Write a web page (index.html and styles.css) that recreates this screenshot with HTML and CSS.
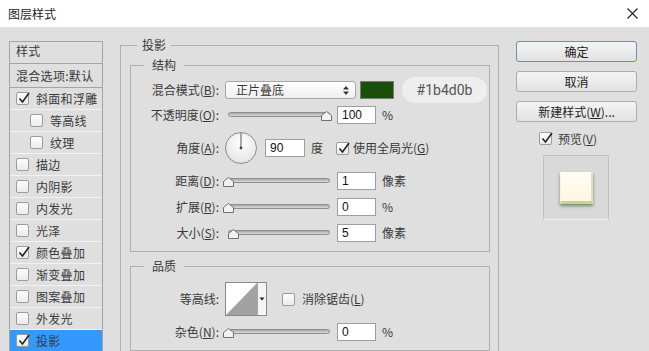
FILE: index.html
```html
<!DOCTYPE html>
<html lang="zh-CN">
<head>
  <meta charset="UTF-8" />
  <title>图层样式</title>
  <link rel="stylesheet" href="styles.css">
</head>
<body>
  <div class="titlebar">
    <span class="title">图层样式</span>
    <svg class="close" width="11" height="11" viewBox="0 0 11 11"><path d="M0.5 0.5L10.5 10.5M10.5 0.5L0.5 10.5" stroke="#222" stroke-width="1.1" fill="none"/></svg>
  </div>

  <div class="dialog">
    <ul class="style-list">
      <li class="list-head">样式</li>
      <li class="list-blend">混合选项:默认</li>
      <li class="item"><span class="cb"><svg class="tick" viewBox="0 0 14 14"><path d="M2.5 7.5L5.5 11L12 2" stroke="#222" stroke-width="1.6" fill="none"/></svg></span>斜面和浮雕</li>
      <li class="item sub"><span class="cb"></span>等高线</li>
      <li class="item sub"><span class="cb"></span>纹理</li>
      <li class="item"><span class="cb"></span>描边</li>
      <li class="item"><span class="cb"></span>内阴影</li>
      <li class="item"><span class="cb"></span>内发光</li>
      <li class="item"><span class="cb"></span>光泽</li>
      <li class="item"><span class="cb"><svg class="tick" viewBox="0 0 14 14"><path d="M2.5 7.5L5.5 11L12 2" stroke="#222" stroke-width="1.6" fill="none"/></svg></span>颜色叠加</li>
      <li class="item"><span class="cb"></span>渐变叠加</li>
      <li class="item"><span class="cb"></span>图案叠加</li>
      <li class="item"><span class="cb"></span>外发光</li>
      <li class="item active"><span class="cb"><svg class="tick" viewBox="0 0 14 14"><path d="M2.5 7.5L5.5 11L12 2" stroke="#222" stroke-width="1.6" fill="none"/></svg></span>投影</li>
    </ul>

    <fieldset class="group">
      <legend>投影</legend>

      <fieldset class="box">
        <legend>结构</legend>
        <div class="row">
          <span class="lbl">混合模式(<u>B</u>):</span>
          <div class="select">
            <span>正片叠底</span>
            <svg width="6" height="9" viewBox="0 0 6 9"><path d="M0 3.5L3 0L6 3.5Z M0 5.5L3 9L6 5.5Z" fill="#333"/></svg>
          </div>
          <span class="swatch"></span>
          <span class="hex">#1b4d0b</span>
        </div>
        <div class="row row-tight">
          <span class="lbl">不透明度(<u>O</u>):</span>
          <div class="slider">
            <span class="track"></span>
            <svg class="thumb" style="left: 96px" viewBox="0 0 11 10"><path d="M0.5 9.5V4.5L5.5 0.5L10.5 4.5V9.5Z" fill="#f2f2f2" stroke="#6f6f6f"/></svg>
          </div>
          <span class="num">100</span>
          <span class="unit">%</span>
        </div>
        <div class="row row-angle">
          <span class="lbl">角度(<u>A</u>):</span>
          <svg class="dial" width="32" height="32" viewBox="0 0 32 32">
            <defs>
              <radialGradient id="dialfill" cx="0.5" cy="0.35" r="0.7">
                <stop offset="0" stop-color="#ffffff"/>
                <stop offset="1" stop-color="#e2e2e2"/>
              </radialGradient>
            </defs>
            <circle cx="16" cy="16" r="15.5" fill="url(#dialfill)" stroke="#8c8c8c"/>
            <path d="M16 16V1" stroke="#555" stroke-width="1"/>
            <circle cx="16" cy="16" r="1.4" fill="#444"/>
          </svg>
          <span class="num num-angle">90</span>
          <span class="unit">度</span>
          <span class="cb cb-global"><svg class="tick" viewBox="0 0 14 14"><path d="M2.5 7.5L5.5 11L12 2" stroke="#222" stroke-width="1.6" fill="none"/></svg></span>
          <span class="cb-text">使用全局光(<u>G</u>)</span>
        </div>
        <div class="row">
          <span class="lbl">距离(<u>D</u>):</span>
          <div class="slider">
            <span class="track"></span>
            <svg class="thumb" style="left: -2px" viewBox="0 0 11 10"><path d="M0.5 9.5V4.5L5.5 0.5L10.5 4.5V9.5Z" fill="#f2f2f2" stroke="#6f6f6f"/></svg>
          </div>
          <span class="num">1</span>
          <span class="unit">像素</span>
        </div>
        <div class="row">
          <span class="lbl">扩展(<u>R</u>):</span>
          <div class="slider">
            <span class="track"></span>
            <svg class="thumb" style="left: -2px" viewBox="0 0 11 10"><path d="M0.5 9.5V4.5L5.5 0.5L10.5 4.5V9.5Z" fill="#f2f2f2" stroke="#6f6f6f"/></svg>
          </div>
          <span class="num">0</span>
          <span class="unit">%</span>
        </div>
        <div class="row">
          <span class="lbl">大小(<u>S</u>):</span>
          <div class="slider">
            <span class="track"></span>
            <svg class="thumb" style="left: 3px" viewBox="0 0 11 10"><path d="M0.5 9.5V4.5L5.5 0.5L10.5 4.5V9.5Z" fill="#f2f2f2" stroke="#6f6f6f"/></svg>
          </div>
          <span class="num">5</span>
          <span class="unit">像素</span>
        </div>
      </fieldset>

      <fieldset class="box box-quality">
        <legend>品质</legend>
        <div class="row row-contour">
          <span class="lbl">等高线:</span>
          <svg class="contour" width="42" height="34" viewBox="0 0 42 34">
            <rect x="0.5" y="0.5" width="41" height="33" fill="#fff" stroke="#8a8a8a"/>
            <path d="M1 33L32 1V33Z" fill="#a2a2a2"/>
            <rect x="32" y="1" width="9" height="32" fill="#f5f5f5"/>
            <path d="M32.5 1V33" stroke="#a8a8a8"/>
            <path d="M34.5 15.5H39.5L37 18.5Z" fill="#222"/>
          </svg>
          <span class="cb cb-aa"></span>
          <span class="cb-text cb-text-aa">消除锯齿(<u>L</u>)</span>
        </div>
        <div class="row row-tight">
          <span class="lbl">杂色(<u>N</u>):</span>
          <div class="slider">
            <span class="track"></span>
            <svg class="thumb" style="left: -2px" viewBox="0 0 11 10"><path d="M0.5 9.5V4.5L5.5 0.5L10.5 4.5V9.5Z" fill="#f2f2f2" stroke="#6f6f6f"/></svg>
          </div>
          <span class="num">0</span>
          <span class="unit">%</span>
        </div>
      </fieldset>
    </fieldset>

    <div class="side">
      <button class="btn btn-default">确定</button>
      <button class="btn">取消</button>
      <button class="btn btn-new">新建样式(<u>W</u>)...</button>
      <div class="preview-check">
        <span class="cb"><svg class="tick" viewBox="0 0 14 14"><path d="M2.5 7.5L5.5 11L12 2" stroke="#222" stroke-width="1.6" fill="none"/></svg></span>
        <span class="cb-text">预览(<u>V</u>)</span>
      </div>
      <div class="preview">
        <span class="preview-swatch"></span>
      </div>
    </div>
  </div>
</body>
</html>
```

FILE: styles.css
```css
:root {
  --panel: #dfdfdf;
  --line: #b0b0b0;
  --text: #3a3a3a;
  --select-blue: #3399ff;
}

body {
  margin: 0;
  width: 649px;
  height: 351px;
  overflow: hidden;
  background: var(--panel);
  color: var(--text);
  font-family: "Noto Sans CJK SC", "Liberation Sans", sans-serif;
  font-size: 12px;
  line-height: 14px;
}

u {
  text-decoration: underline;
  text-underline-offset: 1px;
}

.titlebar {
  height: 27px;
  background: #fff;
  display: flex;
  align-items: center;
  justify-content: space-between;
  padding: 0 11px 0 8px;
}

.title {
  font-size: 12px;
  color: #1e1e1e;
}

.dialog {
  display: flex;
  align-items: flex-start;
  padding-top: 11px;
}

/* left effects list */
.style-list {
  list-style: none;
  margin: 3px 0 0 9px;
  padding: 0;
  width: 94px;
  box-sizing: border-box;
  border: 1px solid #a4a4a4;
  border-bottom: none;
  flex: none;
  letter-spacing: 0.3px;
}

.list-head {
  height: 19px;
  padding: 2px 0 0 6px;
  border-bottom: 1px solid #a4a4a4;
}

.list-blend {
  height: 23px;
  padding-left: 6px;
  display: flex;
  align-items: center;
  border-bottom: 1px solid #a4a4a4;
  white-space: nowrap;
}

.item {
  height: 21px;
  padding-left: 6px;
  display: flex;
  align-items: center;
  border-bottom: 1px solid #f2f2f2;
}

.item.sub {
  padding-left: 20px;
}

.item.active {
  background: var(--select-blue);
}

.item .cb {
  margin-right: 7px;
}

/* checkbox */
.cb {
  position: relative;
  flex: none;
  width: 11px;
  height: 11px;
  border: 1px solid #9b9b9b;
  border-radius: 2px;
  background: linear-gradient(#fdfdfd, #ebebeb);
}

.tick {
  position: absolute;
  left: 0;
  top: -2px;
  width: 14px;
  height: 14px;
}

/* group boxes */
.group {
  margin: 0 0 0 17px;
  width: 379px;
  box-sizing: border-box;
  padding: 0 8px 12px 9px;
  border: 1px solid var(--line);
  min-width: 0;
  flex: none;
}

.group > legend {
  margin-left: 7px;
  padding: 0 5px;
  line-height: 14px;
}

.box {
  margin: 6px 0 0;
  padding: 9px 0;
  border: 1px solid var(--line);
  min-width: 0;
}

.box > legend {
  margin-left: 13px;
  padding: 0 8px;
  line-height: 14px;
}

.box-quality {
  margin-top: 7px;
}

.row {
  display: flex;
  align-items: center;
  height: 18px;
  margin-top: 8px;
  white-space: nowrap;
}

.row:first-of-type {
  margin-top: 0;
}

.row-tight {
  margin-top: 7px;
}

.row-angle {
  height: 32px;
}

.row-contour {
  height: 34px;
}

.lbl {
  width: 88px;
  margin-right: 6px;
  text-align: right;
  flex: none;
}

.select {
  width: 131px;
  height: 18px;
  box-sizing: border-box;
  border: 1px solid #a6a6a6;
  border-radius: 3px;
  background: linear-gradient(#fefefe, #f0f0f0);
  display: flex;
  align-items: center;
  justify-content: space-between;
  padding: 0 6px 0 10px;
}

.swatch {
  margin-left: 4px;
  width: 34px;
  height: 18px;
  box-sizing: border-box;
  border: 1px solid #7a7a7a;
  background: #1b4d0b;
}

.hex {
  margin-left: 8px;
  width: 85px;
  height: 26px;
  border-radius: 13px;
  background: #eeeeee;
  color: #555;
  font-family: Roboto, "Liberation Sans", sans-serif;
  font-size: 14px;
  line-height: 26px;
  text-align: center;
}

/* slider */
.slider {
  position: relative;
  width: 108px;
  height: 18px;
  flex: none;
}

.track {
  position: absolute;
  left: 3px;
  top: 6px;
  width: 102px;
  height: 5px;
  box-sizing: border-box;
  border: 1px solid #8e8e8e;
  border-radius: 3px;
  background: linear-gradient(#a8a8a8, #dadada);
}

.thumb {
  position: absolute;
  top: 5px;
  width: 11px;
  height: 10px;
}

.num {
  margin-left: 4px;
  width: 39px;
  height: 18px;
  box-sizing: border-box;
  border: 1px solid #9e9e9e;
  background: #fff;
  padding-left: 4px;
  font-family: "Liberation Sans", sans-serif;
  font-size: 12px;
  line-height: 16px;
  color: #111;
}

.num-angle {
  margin-left: 8px;
  width: 40px;
}

.unit {
  margin-left: 6px;
}

.cb-global {
  margin-left: 13px;
}

.cb-text {
  margin-left: 4px;
}

.cb-aa {
  margin-left: 15px;
}

.cb-text-aa {
  margin-left: 7px;
}

/* right column */
.side {
  margin: 3px 0 0 17px;
  width: 121px;
  display: flex;
  flex-direction: column;
  flex: none;
}

.btn {
  height: 21px;
  margin: 0 0 9px;
  padding: 0;
  border: 1px solid #acacac;
  border-radius: 3px;
  background: linear-gradient(#f4f4f4, #e2e2e2);
  font-family: "Noto Sans CJK SC", sans-serif;
  font-size: 12px;
  color: #222;
}

.btn-default {
  border-color: #6f8eae;
}

.btn-new {
  margin-bottom: 10px;
}

.preview-check {
  display: flex;
  align-items: center;
  height: 13px;
  padding-left: 23px;
}

.preview-check .cb-text {
  margin-left: 6px;
}

.preview {
  margin: 10px 0 0 27px;
  width: 66px;
  height: 65px;
  box-sizing: border-box;
  border: 1px solid #c2c2c2;
  border-bottom-color: #f2f2f2;
  background: #d9d9d9;
  display: flex;
  align-items: center;
  justify-content: center;
}

.preview-swatch {
  width: 33px;
  height: 32px;
  box-sizing: border-box;
  background: linear-gradient(#fffdf5, #fff6e2);
  border-top: 1px solid #fffef8;
  border-left: 1px solid #fbf3dc;
  border-right: 2px solid #e7dbb8;
  border-bottom: 3px solid #d9c9a0;
  box-shadow: 0 2px 3px rgba(27, 77, 11, 0.55);
}
```
